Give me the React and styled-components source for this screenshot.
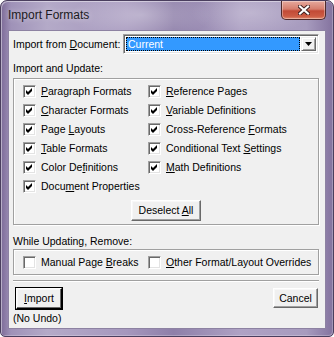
import React from 'react';
import styled, { createGlobalStyle } from 'styled-components';

const Global = createGlobalStyle`
  html, body { margin: 0; padding: 0; background: #ffffff; }
  body { font-family: "Liberation Sans", Arial, sans-serif; }
  #root { width: 334px; height: 337px; }
`;

const Window = styled.div`
  width: 334px;
  height: 337px;
  box-sizing: border-box;
  border: 1px solid #4a3e5e;
  border-radius: 7px 7px 5px 5px;
  padding: 0 7px 7px 7px;
  display: flex;
  flex-direction: column;
  background:
    radial-gradient(ellipse 70px 26px at 140px 14px, rgba(255,255,255,0.32), rgba(255,255,255,0)),
    radial-gradient(ellipse 60px 22px at 250px 12px, rgba(255,255,255,0.22), rgba(255,255,255,0)),
    linear-gradient(90deg, #7d6b98 0%, #9f92b8 3%, #b4aac8 14%, #a597bd 38%, #8e7fa9 52%, #aea2c4 72%, #a79bbe 92%, #84739f 100%);
  box-shadow: inset 1px 1px 0 rgba(255,255,255,0.45), inset -1px -1px 0 rgba(255,255,255,0.25);
`;

const TitleBar = styled.div`
  height: 29px;
  display: flex;
  justify-content: space-between;
  align-items: flex-start;
  flex: none;
`;

const Title = styled.div`
  font-family: "Liberation Sans", Arial, sans-serif;
  font-size: 12px;
  color: #1c1a22;
  line-height: 14px;
  margin-top: 7px;
  text-shadow: 0 0 6px rgba(255,255,255,0.6);
`;

const CloseButton = styled.div`
  width: 45px;
  height: 19px;
  box-sizing: border-box;
  border: 1px solid #4f2b2b;
  border-top: none;
  border-radius: 0 0 5px 5px;
  background: linear-gradient(180deg, #e6a99d 0%, #d67d6d 45%, #c24a36 55%, #cc5c44 85%, #e08a6e 100%);
  box-shadow: inset 0 0 0 1px rgba(255,255,255,0.35);
  display: flex;
  align-items: center;
  justify-content: center;
`;

const Client = styled.div`
  flex: 1;
  box-sizing: border-box;
  background: #f0f0f0;
  border: 1px solid #8d82a2;
  padding: 3px 6px 0 4px;
  display: flex;
  flex-direction: column;
  font-size: 10.5px;
  color: #000;
`;

const DocRow = styled.div`
  height: 20px;
  display: flex;
  align-items: center;
  justify-content: space-between;
`;

const Text = styled.span`
  line-height: 13px;
  white-space: nowrap;
`;

const Key = styled.span`
  text-decoration: underline;
  text-underline-offset: 1px;
`;

const Select = styled.div`
  width: 196px;
  height: 20px;
  box-sizing: border-box;
  background: #fff;
  border: 1px solid;
  border-color: #a0a0a0 #ffffff #ffffff #a0a0a0;
  box-shadow: inset 1px 1px 0 #696969, inset -1px -1px 0 #e3e3e3;
  padding: 2px;
  display: flex;
  align-items: stretch;
  gap: 1px;
`;

const Chosen = styled.div`
  flex: 1;
  background: #3399ff;
  color: #fff;
  outline: 1px dotted #000;
  outline-offset: -1px;
  padding-left: 2px;
  display: flex;
  align-items: center;
  font-size: 10.5px;
`;

const ArrowButton = styled.div`
  width: 15px;
  box-sizing: border-box;
  background: #f0f0f0;
  border: 1px solid;
  border-color: #f0f0f0 #696969 #696969 #f0f0f0;
  box-shadow: inset 1px 1px 0 #fff, inset -1px -1px 0 #a0a0a0;
  display: flex;
  align-items: center;
  justify-content: center;
`;

const SectionLabel = styled.div`
  line-height: 13px;
  margin-top: ${p => p.$top}px;
  white-space: nowrap;
`;

const GroupBox = styled.div`
  margin-top: ${p => p.$top}px;
  box-sizing: border-box;
  border: 1px solid #a0a0a0;
  box-shadow: 1px 1px 0 #fff, inset 1px 1px 0 #fff;
  width: 306px;
  padding: ${p => p.$pad};
  display: flex;
  flex-direction: column;
  align-items: center;
`;

const CheckGrid = styled.div`
  align-self: stretch;
  display: grid;
  grid-template-columns: 125px 1fr;
  grid-template-rows: ${p => `repeat(${p.$rows}, ${p.$rowH}px)`};
  grid-auto-flow: column;
  padding-left: 9px;
`;

const CheckItem = styled.label`
  display: flex;
  align-items: center;
  gap: 5px;
  white-space: nowrap;
`;

const Box = styled.span`
  width: 13px;
  height: 13px;
  flex: none;
  box-sizing: border-box;
  background: #fff;
  border: 1px solid;
  border-color: #a0a0a0 #ffffff #ffffff #a0a0a0;
  box-shadow: inset 1px 1px 0 #696969, inset -1px -1px 0 #e3e3e3;
  display: flex;
  align-items: center;
  justify-content: center;
`;

const Button = styled.div`
  box-sizing: border-box;
  width: ${p => p.$w}px;
  height: ${p => p.$h}px;
  background: #f0f0f0;
  border: 1px solid;
  border-color: #ffffff #696969 #696969 #ffffff;
  box-shadow: inset -1px -1px 0 #a0a0a0, inset 1px 1px 0 #f8f8f8;
  display: flex;
  align-items: center;
  justify-content: center;
  line-height: 13px;
  white-space: nowrap;
  ${p => p.$default && `
    outline: 1px solid #000;
    border-color: #ffffff #000000 #000000 #ffffff;
    box-shadow: inset -1px -1px 0 #696969, inset 1px 1px 0 #f8f8f8;
  `}
`;

const DeselectWrap = styled.div`
  margin-top: 4px;
`;

const Separator = styled.div`
  margin-top: 5px;
  width: 306px;
  height: 0;
  border-top: 1px solid #a0a0a0;
  border-bottom: 1px solid #fff;
`;

const ButtonRow = styled.div`
  margin-top: 6px;
  display: flex;
  justify-content: space-between;
  align-items: flex-start;
  width: 305px;
  padding-left: 3px;
  box-sizing: border-box;
`;

const Note = styled.div`
  margin-top: 3px;
  line-height: 13px;
`;

const Check = () => (
  <svg width="7" height="7" viewBox="0 0 7 7">
    <polygon points="0,2 2,4 6,0 6,3 2,7 0,5" fill="#000" />
  </svg>
);

const CheckBox = ({ checked, children }) => (
  <CheckItem>
    <Box>{checked && <Check />}</Box>
    <Text>{children}</Text>
  </CheckItem>
);

export default function App() {
  return (
    <>
      <Global />
      <Window>
        <TitleBar>
          <Title>Import Formats</Title>
          <CloseButton>
            <svg width="12" height="10" viewBox="0 0 12 10">
              <path d="M2 1.5 L10 8.5 M10 1.5 L2 8.5" stroke="#3b1e1e" strokeWidth="4" strokeLinecap="square" />
              <path d="M2 1.5 L10 8.5 M10 1.5 L2 8.5" stroke="#ffffff" strokeWidth="2.2" strokeLinecap="square" />
            </svg>
          </CloseButton>
        </TitleBar>
        <Client>
          <DocRow>
            <Text>Import from <Key>D</Key>ocument:</Text>
            <Select>
              <Chosen>Current</Chosen>
              <ArrowButton>
                <svg width="7" height="4" viewBox="0 0 7 4">
                  <polygon points="0,0 7,0 3.5,4" fill="#000" />
                </svg>
              </ArrowButton>
            </Select>
          </DocRow>
          <SectionLabel $top={8}>Import and Update:</SectionLabel>
          <GroupBox $top={3} $pad="3px 0 3px 0">
            <CheckGrid $rows={6} $rowH={19}>
              <CheckBox checked><Key>P</Key>aragraph Formats</CheckBox>
              <CheckBox checked><Key>C</Key>haracter Formats</CheckBox>
              <CheckBox checked>Page <Key>L</Key>ayouts</CheckBox>
              <CheckBox checked><Key>T</Key>able Formats</CheckBox>
              <CheckBox checked>Color De<Key>f</Key>initions</CheckBox>
              <CheckBox checked>Docu<Key>m</Key>ent Properties</CheckBox>
              <CheckBox checked><Key>R</Key>eference Pages</CheckBox>
              <CheckBox checked><Key>V</Key>ariable Definitions</CheckBox>
              <CheckBox checked>Cross-Reference <Key>F</Key>ormats</CheckBox>
              <CheckBox checked>Conditional Text <Key>S</Key>ettings</CheckBox>
              <CheckBox checked><Key>M</Key>ath Definitions</CheckBox>
            </CheckGrid>
            <DeselectWrap>
              <Button $w={70} $h={21}><Text>Deselect <Key>A</Key>ll</Text></Button>
            </DeselectWrap>
          </GroupBox>
          <SectionLabel $top={10}>While Updating, Remove:</SectionLabel>
          <GroupBox $top={1} $pad="0">
            <CheckGrid $rows={1} $rowH={24}>
              <CheckBox>Manual Page <Key>B</Key>reaks</CheckBox>
              <CheckBox><Key>O</Key>ther Format/Layout Overrides</CheckBox>
            </CheckGrid>
          </GroupBox>
          <Separator />
          <ButtonRow>
            <Button $w={46} $h={21} $default><Text><Key>I</Key>mport</Text></Button>
            <Button $w={45} $h={20}>Cancel</Button>
          </ButtonRow>
          <Note>(No Undo)</Note>
        </Client>
      </Window>
    </>
  );
}
